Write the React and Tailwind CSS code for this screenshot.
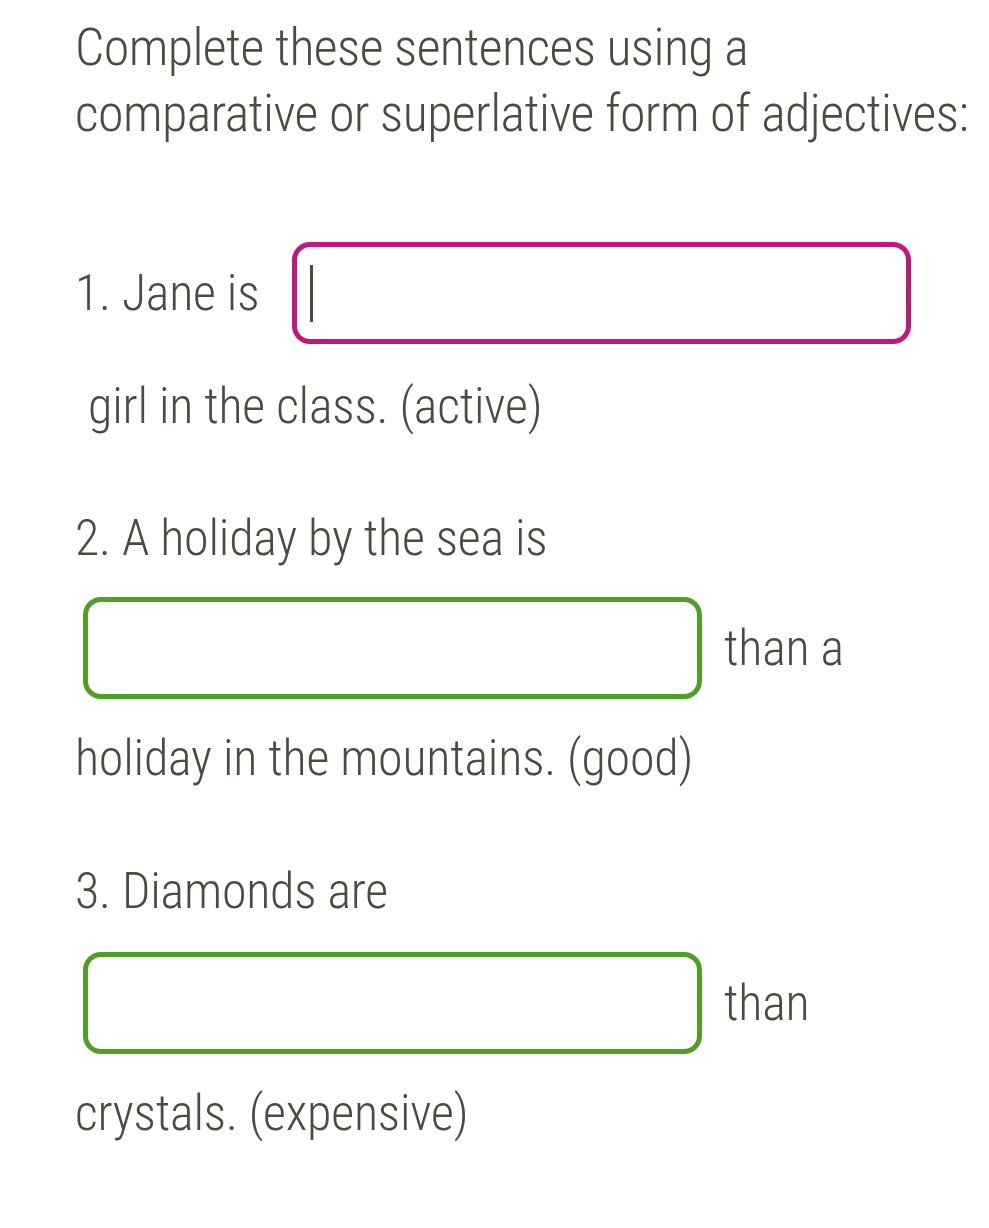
import React from 'react';

const TEXT = 'text-[#4b4b41]';

function Blank({ color, active }) {
  return (
    <div
      className={`h-[102px] w-[619px] shrink-0 rounded-[18px] border-[5px] ${color} bg-white flex items-center pl-[13px]`}
    >
      {active && <span className="block h-[57px] w-[3px] bg-[#4b4b41]" />}
    </div>
  );
}

export default function App() {
  return (
    <div
      className={`min-h-[1228px] bg-white pl-[75px] pt-[15px] ${TEXT}`}
      style={{ fontFamily: 'Roboto, "Liberation Sans", sans-serif' }}
    >
      {/* Task heading */}
      <h1 className="whitespace-nowrap text-[52px] leading-[66px] font-[360] font-stretch-condensed tracking-[-0.6px]">
        Complete these sentences using a<br />
        comparative or superlative form of adjectives:
      </h1>

      <div className="whitespace-nowrap text-[50px] leading-[56px] font-light font-stretch-condensed tracking-[-0.2px]">
        {/* 1 */}
        <div className="mt-[95px] flex items-center gap-[33px]">
          <span>1. Jane is</span>
          <Blank color="border-[#c0187a]" active />
        </div>
        <p className="mt-[34px] pl-[13px]">girl in the class. (active)</p>

        {/* 2 */}
        <p className="mt-[76px]">2. A holiday by the sea is</p>
        <div className="mt-[31px] ml-[8px] flex items-center gap-[22px]">
          <Blank color="border-[#4f9f22]" />
          <span>than a</span>
        </div>
        <p className="mt-[31px]">holiday in the mountains. (good)</p>

        {/* 3 */}
        <p className="mt-[77px]">3. Diamonds are</p>
        <div className="mt-[33px] ml-[8px] flex items-center gap-[22px]">
          <Blank color="border-[#4f9f22]" />
          <span>than</span>
        </div>
        <p className="mt-[31px]">crystals. (expensive)</p>
      </div>
    </div>
  );
}
